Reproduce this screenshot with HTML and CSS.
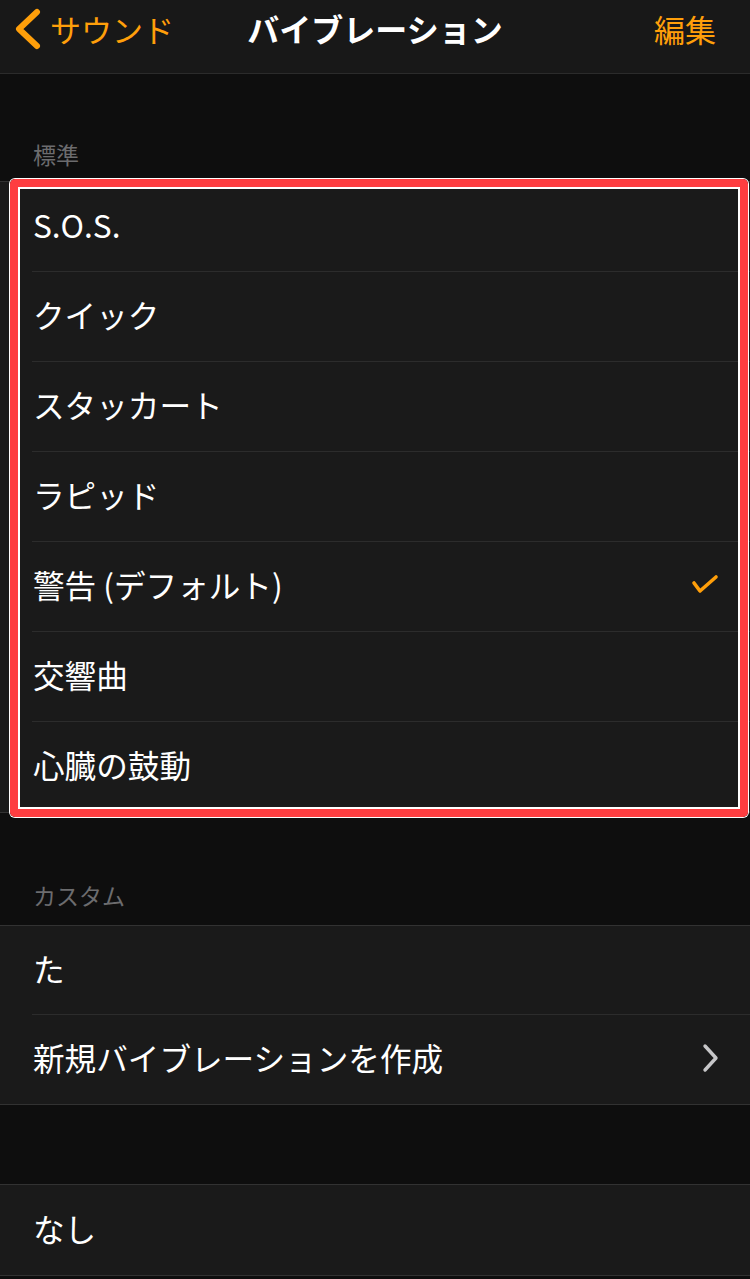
FILE: index.html
```html
<!DOCTYPE html>
<html lang="ja">
<head>
<meta charset="utf-8">
<link rel="stylesheet" href="styles.css">
</head>
<body>
<header class="nav">
  <div class="nav-left">
    <svg class="back-chev" width="28" height="42" viewBox="0 0 28 42"><path d="M23 4 L5 21 L23 38" fill="none" stroke="#ff9f0a" stroke-width="6" stroke-linecap="round" stroke-linejoin="round"/></svg>
    <span class="back-text">サウンド</span>
  </div>
  <div class="nav-title">バイブレーション</div>
  <div class="nav-right">編集</div>
</header>

<section class="section first">
  <div class="section-header">標準</div>
  <div class="group highlighted">
    <div class="row"><span>S.O.S.</span></div>
    <div class="row"><span>クイック</span></div>
    <div class="row"><span>スタッカート</span></div>
    <div class="row"><span>ラピッド</span></div>
    <div class="row"><span>警告 (デフォルト)</span>
      <svg class="check" width="28" height="22" viewBox="0 0 28 22"><path d="M3 9 L9 17 L25 3" fill="none" stroke="#ff9f0a" stroke-width="3.6" stroke-linecap="round" stroke-linejoin="round"/></svg>
    </div>
    <div class="row"><span>交響曲</span></div>
    <div class="row"><span>心臓の鼓動</span></div>
    <div class="highlight-box"></div>
  </div>
</section>

<section class="section custom">
  <div class="section-header">カスタム</div>
  <div class="group">
    <div class="row"><span>た</span></div>
    <div class="row"><span>新規バイブレーションを作成</span>
      <svg class="chev" width="20" height="30" viewBox="0 0 20 30"><path d="M4 3 L15 15 L4 27" fill="none" stroke="#c7c7c9" stroke-width="3.4" stroke-linecap="round" stroke-linejoin="round"/></svg>
    </div>
  </div>
</section>

<section class="section last">
  <div class="group">
    <div class="row"><span>なし</span></div>
  </div>
</section>
</body>
</html>
```

FILE: styles.css
```css
* { box-sizing: border-box; }

body {
  margin: 0;
  background: #0e0e0e;
  font-family: "Noto Sans CJK JP", "Noto Sans", sans-serif;
  color: #ffffff;
  width: 750px;
  height: 1279px;
  overflow: hidden;
}

.nav {
  height: 74px;
  background: #181818;
  border-bottom: 1px solid #2b2b2b;
  display: grid;
  grid-template-columns: 1fr auto 1fr;
  align-items: start;
  padding: 0 34px;
}

.nav-left {
  display: flex;
  align-items: center;
  height: 56px;
  margin-left: -20px;
  color: #ff9f0a;
}

.back-chev {
  margin-right: 8px;
  margin-top: 1px;
}

.back-text {
  font-size: 31px;
  line-height: 1;
}

.nav-title {
  height: 56px;
  display: flex;
  align-items: center;
  font-size: 32px;
  font-weight: 700;
  line-height: 1;
}

.nav-right {
  height: 56px;
  display: flex;
  align-items: center;
  justify-content: flex-end;
  font-size: 31px;
  color: #ff9f0a;
  line-height: 1;
}

.section-header {
  height: 107px;
  display: flex;
  align-items: flex-end;
  padding-left: 33px;
  padding-bottom: 15px;
  font-size: 23px;
  line-height: 1;
  color: #6c6c6e;
}

.section:not(.first) .section-header {
  height: 112px;
  padding-bottom: 18px;
}

.section.last {
  padding-top: 79px;
}

.group {
  position: relative;
  background: #1a1a1a;
  border-top: 1px solid #323232;
  border-bottom: 1px solid #323232;
}

.row {
  height: 90px;
  display: flex;
  align-items: center;
  justify-content: space-between;
  margin-left: 32px;
  padding-left: 1px;
  padding-right: 32px;
  padding-bottom: 3px;
  border-bottom: 1px solid #2c2c2c;
  font-size: 31.6px;
  line-height: 1;
}

.section.custom .row {
  height: 89px;
}

.row:last-of-type {
  border-bottom: none;
}

.check {
  margin-right: -1px;
}

.chev {
  margin-right: -3px;
}

.highlight-box {
  position: absolute;
  left: 10px;
  right: 2px;
  top: -3px;
  bottom: -5px;
  border: 8px solid #fe3d40;
  border-radius: 5px;
  box-shadow: 0 0 0 1px #ffffff, inset 0 0 0 2px #ffffff;
  pointer-events: none;
}
```
